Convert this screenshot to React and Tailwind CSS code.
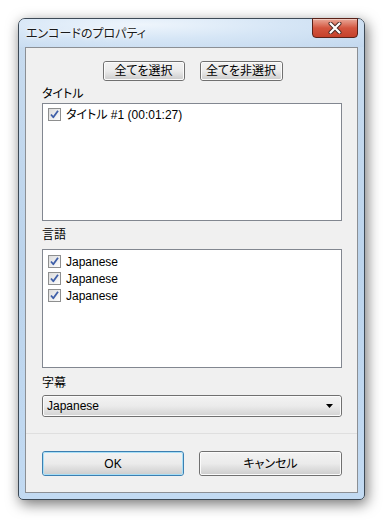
import React from 'react'

const font = "font-['Liberation_Sans','Noto_Sans_CJK_JP',sans-serif]"

const CheckBox = () => (
  <span className="w-[13px] h-[13px] shrink-0 border border-[#8e8f8f] bg-gradient-to-br from-[#dcdcdc] to-[#fdfdfd] flex items-center justify-center">
    <svg width="11" height="11" viewBox="0 0 11 11">
      <path d="M2 5.5 L4.3 8.3 L9 1.8" fill="none" stroke="#3f5fa8" strokeWidth="1.8" strokeLinejoin="round" />
    </svg>
  </span>
)

const CheckRow = ({ label }) => (
  <div className="h-[17px] flex items-center gap-[5px] pl-[5px]">
    <CheckBox />
    <span className="text-[12px] text-black leading-none [font-feature-settings:'palt']">{label}</span>
  </div>
)

const WinButton = ({ children, className = '', isDefault = false }) => (
  <button
    className={`rounded-[3px] border ${isDefault ? 'border-[#3c7fb1]' : 'border-[#707070]'} p-0 flex ${className}`}
  >
    <span
      className={`flex-1 rounded-[2px] border ${isDefault ? 'border-[#a7def6]' : 'border-[#fbfbfb]'} bg-gradient-to-b from-[#f2f2f2] via-[#ebebeb] to-[#cfcfcf] flex items-center justify-center text-[12px] text-black [font-feature-settings:'palt']`}
    >
      {children}
    </span>
  </button>
)

const ListBox = ({ className = '', children }) => (
  <div className={`bg-white border border-[#828790] pt-[2px] ${className}`}>{children}</div>
)

const Label = ({ children, className = '' }) => (
  <div className={`h-[16px] leading-[16px] text-[12px] text-black ${className}`}>{children}</div>
)

export default function App() {
  return (
    <div className={`w-[387px] h-[522px] bg-white pt-[18px] pl-[18px] ${font}`}>
      <div className="w-[347px] h-[482px] rounded-t-[7px] rounded-b-[5px] border border-[#3d4a57] bg-gradient-to-b from-[#c9dcef] via-[#bcd4ec] to-[#c2daf2] shadow-[2px_4px_14px_rgba(0,0,0,0.55)] flex flex-col px-[6px] pb-[6px]">
        <div className="h-[28px] flex items-start justify-between -mx-[6px] px-[6px] rounded-t-[6px] bg-[radial-gradient(ellipse_at_35%_20%,#eef5fc_0%,#d6e6f6_45%,#c3d8ee_100%)]">
          <span className="pt-[8px] pl-[1px] text-[12px] leading-[14px] text-[#1a1a1a] [text-shadow:0_0_6px_#ffffff,0_0_3px_#ffffff] [font-feature-settings:'palt']">
            エンコードのプロパティ
          </span>
          <div className="-mt-px w-[46px] h-[20px] rounded-b-[4px] border border-[#5a2118] bg-gradient-to-b from-[#e8a798] via-[#d3553f] to-[#c5412b] flex items-center justify-center shadow-[inset_0_1px_0_rgba(255,255,255,0.4)]">
            <svg width="14" height="12" viewBox="0 0 14 12">
              <path d="M2.5 1.5 L11.5 10.5 M11.5 1.5 L2.5 10.5" stroke="#4a2a26" strokeWidth="4" strokeLinecap="round" />
              <path d="M2.5 1.5 L11.5 10.5 M11.5 1.5 L2.5 10.5" stroke="#ffffff" strokeWidth="2.2" strokeLinecap="round" />
            </svg>
          </div>
        </div>

        <div className="flex-1 border border-[#8b8f94] bg-[#f0f0f0] flex flex-col">
          <div className="flex flex-col pl-[16px] pr-[15px]">
            <div className="mt-[13px] flex justify-center gap-[15px] pl-[1px]">
              <WinButton className="w-[82px] h-[20px]">全てを選択</WinButton>
              <WinButton className="w-[83px] h-[20px]">全てを非選択</WinButton>
            </div>

            <Label className="mt-[5px] [font-feature-settings:'palt']">タイトル</Label>
            <ListBox className="mt-[1px] h-[118px]">
              <CheckRow label="タイトル #1 (00:01:27)" />
            </ListBox>

            <Label className="mt-[6px]">言語</Label>
            <ListBox className="mt-[6px] h-[119px] pt-[3px]">
              <CheckRow label="Japanese" />
              <CheckRow label="Japanese" />
              <CheckRow label="Japanese" />
            </ListBox>

            <Label className="mt-[7px]">字幕</Label>
            <div className="mt-[4px] h-[22px] rounded-[3px] border border-[#707070] flex">
              <div className="flex-1 rounded-[2px] border border-[#fbfbfb] bg-gradient-to-b from-[#f2f2f2] via-[#ebebeb] to-[#d5d5d5] flex items-center justify-between pl-[3px] pr-[7px]">
                <span className="text-[12px] text-black">Japanese</span>
                <svg width="7" height="4" viewBox="0 0 7 4">
                  <path d="M0 0 H7 L3.5 4 Z" fill="#000" />
                </svg>
              </div>
            </div>
          </div>

          <div className="mt-[16px] h-px bg-[#dfdfdf]" />

          <div className="mt-[17px] flex pl-[16px] pr-[15px] gap-[15px]">
            <WinButton className="w-[142px] h-[25px]" isDefault>OK</WinButton>
            <WinButton className="w-[143px] h-[25px]">キャンセル</WinButton>
          </div>
        </div>
      </div>
    </div>
  )
}
